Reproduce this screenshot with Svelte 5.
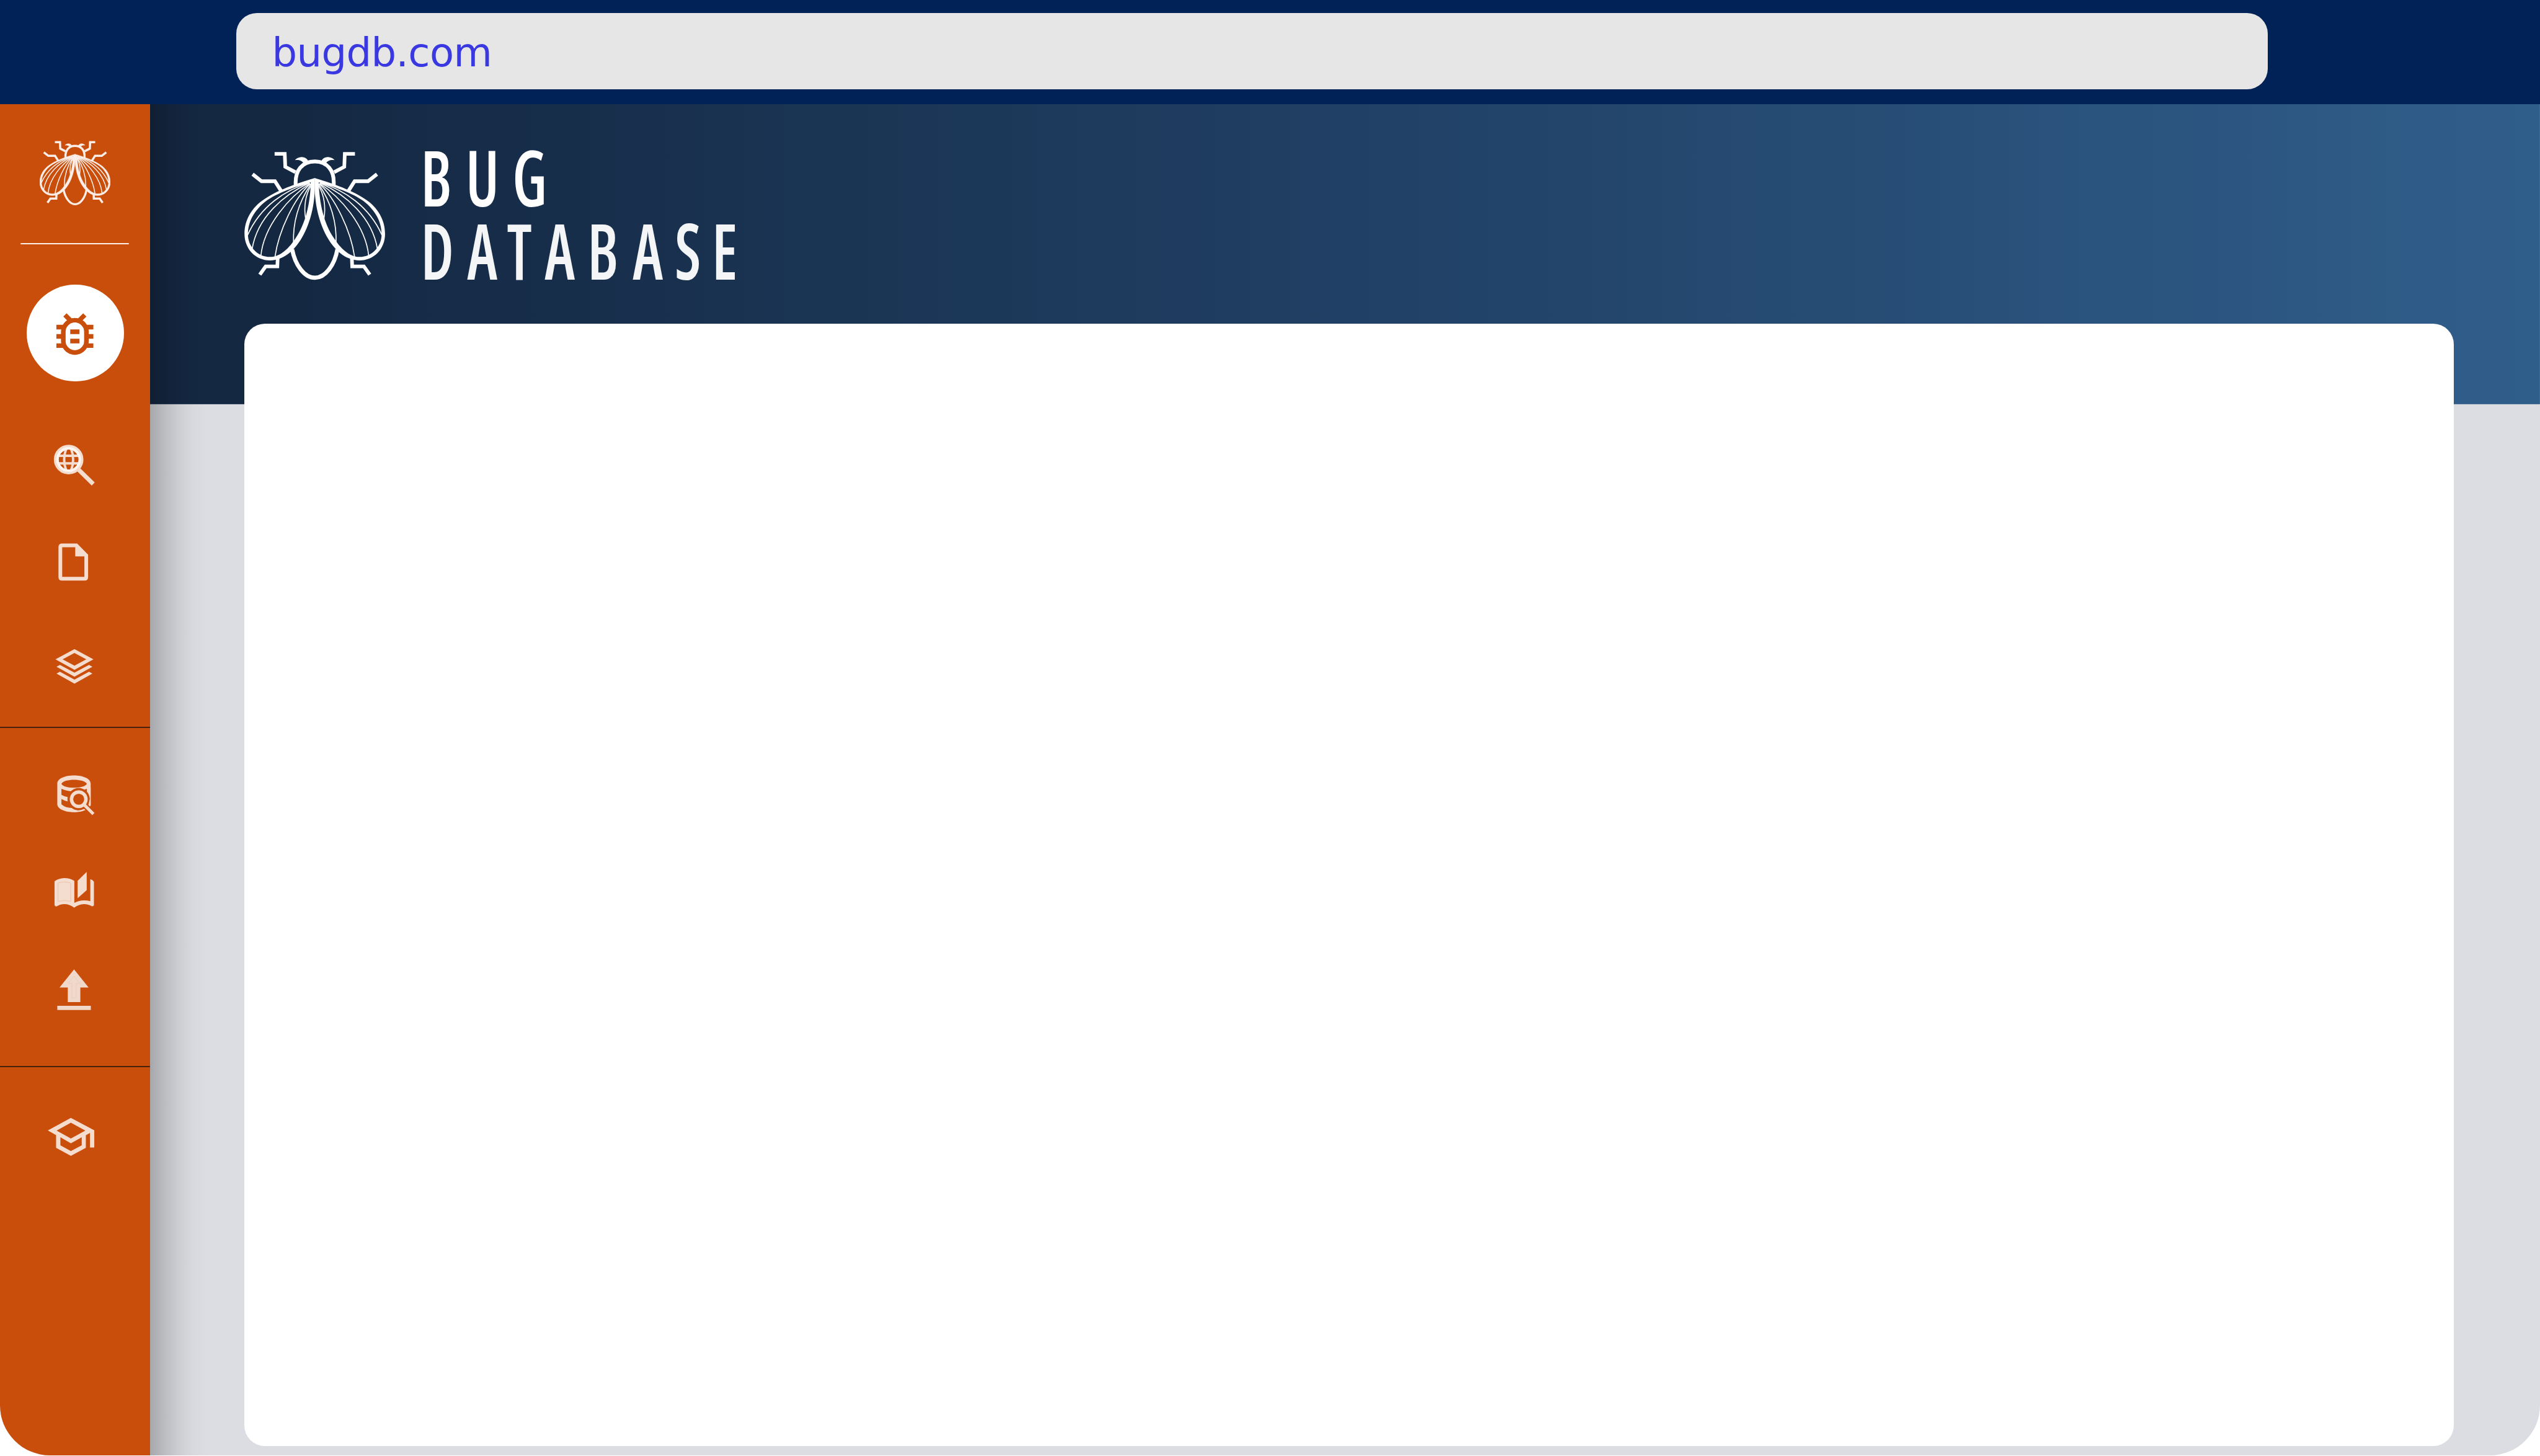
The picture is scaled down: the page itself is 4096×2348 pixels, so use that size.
<script>
  // Veins of the left wing; the right wing mirrors them.
  const veins = [
    'M480 280C340 322 195 415 119 585',
    'M478 282C330 350 175 480 145 668',
    'M482 284C365 360 212 530 196 708',
    'M484 286C390 370 300 560 278 712',
    'M487 288C425 380 380 490 386 635',
    'M489 295C450 360 446 430 457 495'
  ];

  const bugX = [815, 902, 992.5].map((x) => x / 0.8).join(' ');
  const databaseX = [815, 905, 982, 1055.4, 1138, 1226, 1307, 1379].map((x) => x / 0.8).join(' ');
</script>

{#snippet halfBug()}
  <path class="line leg" d="M276 113H335L338 188L397 219" />
  <path class="line leg" d="M148 231L200 272H278L316 332" />
  <path class="line leg" d="M190 815L224 767H292L294 718" />
  <path class="solid" d="M394 149C418 125 455 125 471 153L446 169C436 152 418 146 394 149Z" />
  <path
    class="solid"
    fill-rule="evenodd"
    d="M510 253C440 274 300 318 220 374C140 425 101 500 101 578C101 665 165 732 250 732C400 732 510 520 510 300ZM486 278C484 400 455 520 400 600C362 660 310 712 250 712C175 712 121 650 121 580C121 500 165 435 225 388C290 340 400 302 486 278Z"
  />
  {#each veins as d}
    <path class="line vein" {d} />
  {/each}
{/snippet}

{#snippet beetle()}
  <path class="line body" d="M378 668C395 760 450 833 510 833C570 833 625 760 641 668" />
  <path class="line head" d="M399 298C392 205 440 157 509 157C578 157 627 205 619 298" />
  {@render halfBug()}
  <g transform="translate(1019 0) scale(-1 1)">{@render halfBug()}</g>
{/snippet}

<div class="window">
  <header class="topbar">
    <div class="address">bugdb.com</div>
  </header>

  <div class="main">
    <nav class="sidebar">
      <svg class="brand" viewBox="100 98 819 750">{@render beetle()}</svg>
      <div class="divider"></div>
      <div class="active">
        <svg viewBox="0 0 24 24">
          <path
            d="M20 8h-2.81c-.45-.78-1.07-1.45-1.82-1.96L17 4.41 15.59 3l-2.17 2.17C12.96 5.06 12.49 5 12 5s-.96.06-1.41.17L8.41 3 7 4.41l1.62 1.63C7.88 6.55 7.26 7.22 6.81 8H4v2h2.09c-.05.33-.09.66-.09 1v1H4v2h2v1c0 .34.04.67.09 1H4v2h2.81c1.04 1.79 2.97 3 5.19 3s4.15-1.21 5.19-3H20v-2h-2.09c.05-.33.09-.66.09-1v-1h2v-2h-2v-1c0-.34-.04-.67-.09-1H20V8zm-4 4v3c0 .22-.03.47-.07.7l-.1.65-.37.65c-.72 1.24-2.04 2-3.46 2s-2.74-.77-3.46-2l-.37-.64-.1-.65C8.03 15.48 8 15.23 8 15v-4c0-.23.03-.48.07-.7l.1-.65.37-.65c.3-.52.72-.97 1.21-1.31l.57-.39.74-.18c.31-.08.63-.12.94-.12.32 0 .63.04.95.12l.68.16.61.42c.5.34.91.78 1.21 1.31l.38.65.1.65c.04.22.07.47.07.69v1zm-6 2h4v2h-4zm0-4h4v2h-4z"
          />
        </svg>
      </div>

      <div class="group first">
        <!-- Globe under a magnifying glass -->
        <svg class="icon" viewBox="0 0 291 180">
          <g transform="translate(90 30) scale(.33333)">
            <path class="stroke" stroke-width="14" d="M66 101H193M66 145H193" />
            <ellipse class="stroke" stroke-width="14" cx="129" cy="123" rx="26" ry="70" />
            <circle class="stroke" stroke-width="28" cx="129" cy="123" r="72" />
            <circle class="rim" cx="129" cy="123" r="65" />
            <path class="stroke" stroke-width="25" d="M186 181L272 265" />
          </g>
        </svg>
        <!-- Document with a folded corner -->
        <svg class="icon" viewBox="0 0 291 180">
          <path
            fill-rule="evenodd"
            d="M120.2 53.5H149.5L170.7 75V118.5Q170.7 125.3 163.9 125.3H120.2Q113.3 125.3 113.3 118.5V60.4Q113.3 53.5 120.2 53.5ZM120.5 60.7V118.1H163.5V78.5H145.8V60.7Z"
          />
        </svg>
        <!-- Layers -->
        <svg class="icon tall" viewBox="0 0 291 228">
          <path
            fill-rule="evenodd"
            d="M144.3 77.7L181 97.5L144.3 118L107.5 97.5ZM144.3 85.3L121.3 97.5L144.3 110L167.2 97.5Z"
          />
          <path d="M109.5 112L116 108.4L144.3 123.5L172.5 108.4L179 112L144.3 131.3Z" />
          <path d="M109.5 125.4L116 121.8L144.3 137L172.5 121.8L179 125.4L144.3 144.7Z" />
        </svg>
      </div>

      <div class="group second">
        <!-- Database with a magnifying glass -->
        <svg class="icon db" viewBox="0 0 291 226">
          <g transform="translate(80 79) scale(.33333)">
            <path
              fill-rule="evenodd"
              d="M93 87C93 56 140 39 190 39C240 39 287 56 287 87V205C287 234 240 252 190 252C140 252 93 234 93 205ZM117 87C130 118 250 118 265 87C250 56 130 56 117 87ZM117 116V151Q133 161 155 165V190Q133 186 117 176V206Q140 227 180 228L240 235L265 200V116Q190 147 117 116Z"
            />
            <circle class="cut" cx="217" cy="177" r="65" />
            <path class="cutline" stroke-width="34" d="M250 210L303 263" />
            <path d="M265 118C285 135 290 160 280 185L276 206L287 216V112L265 116Z" />
            <path d="M196 241Q225 246 246 234L251 240Q225 252 190 252Z" />
            <circle class="stroke" stroke-width="20" cx="217.500" cy="177" r="42" />
            <path class="stroke" stroke-width="18" d="M249 209L303 263" />
          </g>
        </svg>
        <!-- Open book with a turning page -->
        <svg class="icon book" viewBox="0 0 291 163">
          <g transform="translate(80 -147) scale(.33333)">
            <path
              d="M77 655Q100 637 134 636Q165 636 192 652V780Q220 765 248 765Q268 765 285 770V642Q298 646 306 656V794Q302 800 294 800Q275 787 248 787Q215 789 191 808Q165 787 134 787Q107 788 90 800Q80 802 77 792Z"
            />
            <path d="M211 652L264 600V706L211 753Z" />
            <path class="seam" d="M97 665Q133 652 171 665V771Q133 761 97 771Z" />
          </g>
        </svg>
        <!-- Upload -->
        <svg class="icon upload" viewBox="0 0 291 266">
          <g transform="translate(80 -310) scale(.33333)">
            <path d="M190.500 1165L275 1271H227V1355H154V1271H106Z" />
            <path d="M93 1377H288V1401H93Z" />
            <path class="seam faint" d="M190.500 1203L225 1247H203V1331H178V1247H156Z" />
          </g>
        </svg>
      </div>

      <div class="group third">
        <!-- Graduation cap -->
        <svg class="icon cap" viewBox="0 0 291 260">
          <g transform="translate(80 81.500) scale(.33333)">
            <path
              fill-rule="evenodd"
              d="M172 50L308 122V222H283V138L259 151V224L172 271L86 224V150L38 123ZM172 78L89 124L172 170L256 124ZM111 163V210L172 243L235 210V163L172 198Z"
            />
          </g>
        </svg>
      </div>
    </nav>

    <section class="content">
      <div class="banner">
        <svg class="mark" viewBox="100 98 819 750">{@render beetle()}</svg>
        <svg class="title" viewBox="800 260 660 310">
          <g transform="scale(.8 1)">
            <text y="400" x={bugX}>BUG</text>
            <text class="dim" y="542" x={databaseX}>DATABASE</text>
          </g>
        </svg>
      </div>
      <div class="panel"></div>
    </section>
  </div>
</div>

<style>
  :global(body) {
    background: #fff;
  }

  .window {
    --u: calc(100vw / 4921);
    --orange: #ca4e0b;
    --pale: #f4dccf;
    display: flex;
    flex-direction: column;
    width: 100vw;
    height: calc(2820 * var(--u));
    overflow: hidden;
    border-radius: 0 0 calc(97 * var(--u)) calc(97 * var(--u));
  }

  .topbar {
    box-sizing: border-box;
    flex: none;
    height: calc(201.9 * var(--u));
    padding: calc(25 * var(--u)) calc(527 * var(--u)) 0 calc(457.2 * var(--u));
    background: #002256;
  }

  .address {
    box-sizing: border-box;
    height: calc(147.5 * var(--u));
    padding-left: calc(69.5 * var(--u));
    border-radius: calc(40 * var(--u));
    background: #e6e6e6;
    color: #3a38e0;
    font: calc(76.9 * var(--u)) / calc(156 * var(--u)) 'DejaVu Sans', sans-serif;
    letter-spacing: calc(-0.7 * var(--u));
  }

  .main {
    display: flex;
    flex: 1;
    min-height: 0;
  }

  .sidebar {
    display: flex;
    flex: none;
    flex-direction: column;
    width: calc(291 * var(--u));
    background: var(--orange);
    fill: var(--pale);
  }

  .brand {
    flex: none;
    width: calc(137 * var(--u));
    height: calc(125.6 * var(--u));
    margin: calc(71.1 * var(--u)) 0 0 calc(76.5 * var(--u));
    color: #fbeee8;
  }

  .divider {
    flex: none;
    width: calc(210 * var(--u));
    height: calc(3 * var(--u));
    margin: calc(72.4 * var(--u)) 0 0 calc(40 * var(--u));
    border-radius: calc(2 * var(--u));
    background: #fdeee6;
  }

  .active {
    display: grid;
    flex: none;
    place-items: center;
    width: calc(188 * var(--u));
    height: calc(188 * var(--u));
    margin: calc(77 * var(--u)) 0 0 calc(52 * var(--u));
    border-radius: 50%;
    background: #fff;
  }

  .active svg {
    width: calc(107.5 * var(--u));
    height: calc(107.5 * var(--u));
    margin-top: calc(4 * var(--u));
    margin-right: calc(1.5 * var(--u));
    fill: var(--orange);
  }

  .group {
    display: flex;
    flex: none;
    flex-direction: column;
  }

  .first {
    margin-top: calc(81 * var(--u));
  }

  .second,
  .third {
    border-top: calc(3 * var(--u)) solid #4a220c;
  }

  .icon {
    display: block;
    width: 100%;
    height: calc(180 * var(--u));
  }

  .tall {
    height: calc(228 * var(--u));
  }

  .db {
    height: calc(226 * var(--u));
  }

  .book {
    height: calc(163 * var(--u));
  }

  .upload {
    height: calc(266 * var(--u));
    fill: #f0d8cb;
  }

  .cap {
    height: calc(260 * var(--u));
  }

  .stroke {
    fill: none;
    stroke: var(--pale);
  }

  .rim {
    fill: none;
    stroke: #fdf6f3;
    stroke-width: 14;
  }

  .cut {
    fill: var(--orange);
  }

  .cutline {
    fill: none;
    stroke: var(--orange);
  }

  .seam {
    fill: none;
    stroke: #eab79c;
    stroke-width: 2.5;
  }

  .faint {
    stroke: #e8c3af;
    stroke-width: 2;
  }

  .solid {
    fill: currentColor;
  }

  .line {
    fill: none;
    stroke: currentColor;
  }

  .body {
    stroke-width: 24;
  }

  .head {
    stroke-width: 22;
  }

  .leg {
    stroke-width: 21;
  }

  .vein {
    stroke-width: 6;
  }

  /* The small mark carries heavier lines */
  .brand .vein {
    stroke-width: 11;
  }

  .brand .solid {
    stroke: currentColor;
    stroke-width: 4;
  }

  .brand .head,
  .brand .leg {
    stroke-width: 25;
  }

  .content {
    position: relative;
    box-sizing: border-box;
    display: flex;
    flex: 1;
    flex-direction: column;
    padding: 0 calc(166.7 * var(--u)) calc(18.5 * var(--u)) calc(182.7 * var(--u));
    background:
      linear-gradient(90deg, #142842 6%, #224369 56%, #305e8b) top / 100% calc(581.3 * var(--u)) no-repeat,
      #dcdde2;
  }

  /* Shadow cast by the sidebar over the page */
  .content::before {
    content: '';
    position: absolute;
    inset: 0 auto 0 0;
    width: calc(110 * var(--u));
    background: linear-gradient(
      90deg,
      rgb(0 0 0 / 0.24),
      rgb(0 0 0 / 0.15) 25%,
      rgb(0 0 0 / 0.07) 50%,
      rgb(0 0 0 / 0.02) 75%,
      transparent
    );
  }

  .banner {
    box-sizing: border-box;
    display: flex;
    flex: none;
    height: calc(425.4 * var(--u));
    color: #fff;
  }

  .mark {
    width: calc(273 * var(--u));
    height: calc(250 * var(--u));
    margin-top: calc(90.8 * var(--u));
  }

  .title {
    width: calc(660 * var(--u));
    height: calc(310 * var(--u));
    margin: calc(58.1 * var(--u)) 0 0 calc(53.3 * var(--u));
    overflow: visible;
    fill: #fff;
    font: 600 150px 'Open Sans', sans-serif;
    font-stretch: 75%;
  }

  .dim {
    fill: #f3f5f7;
  }

  .panel {
    flex: 1;
    border-radius: calc(40 * var(--u));
    background: #fff;
  }
</style>
